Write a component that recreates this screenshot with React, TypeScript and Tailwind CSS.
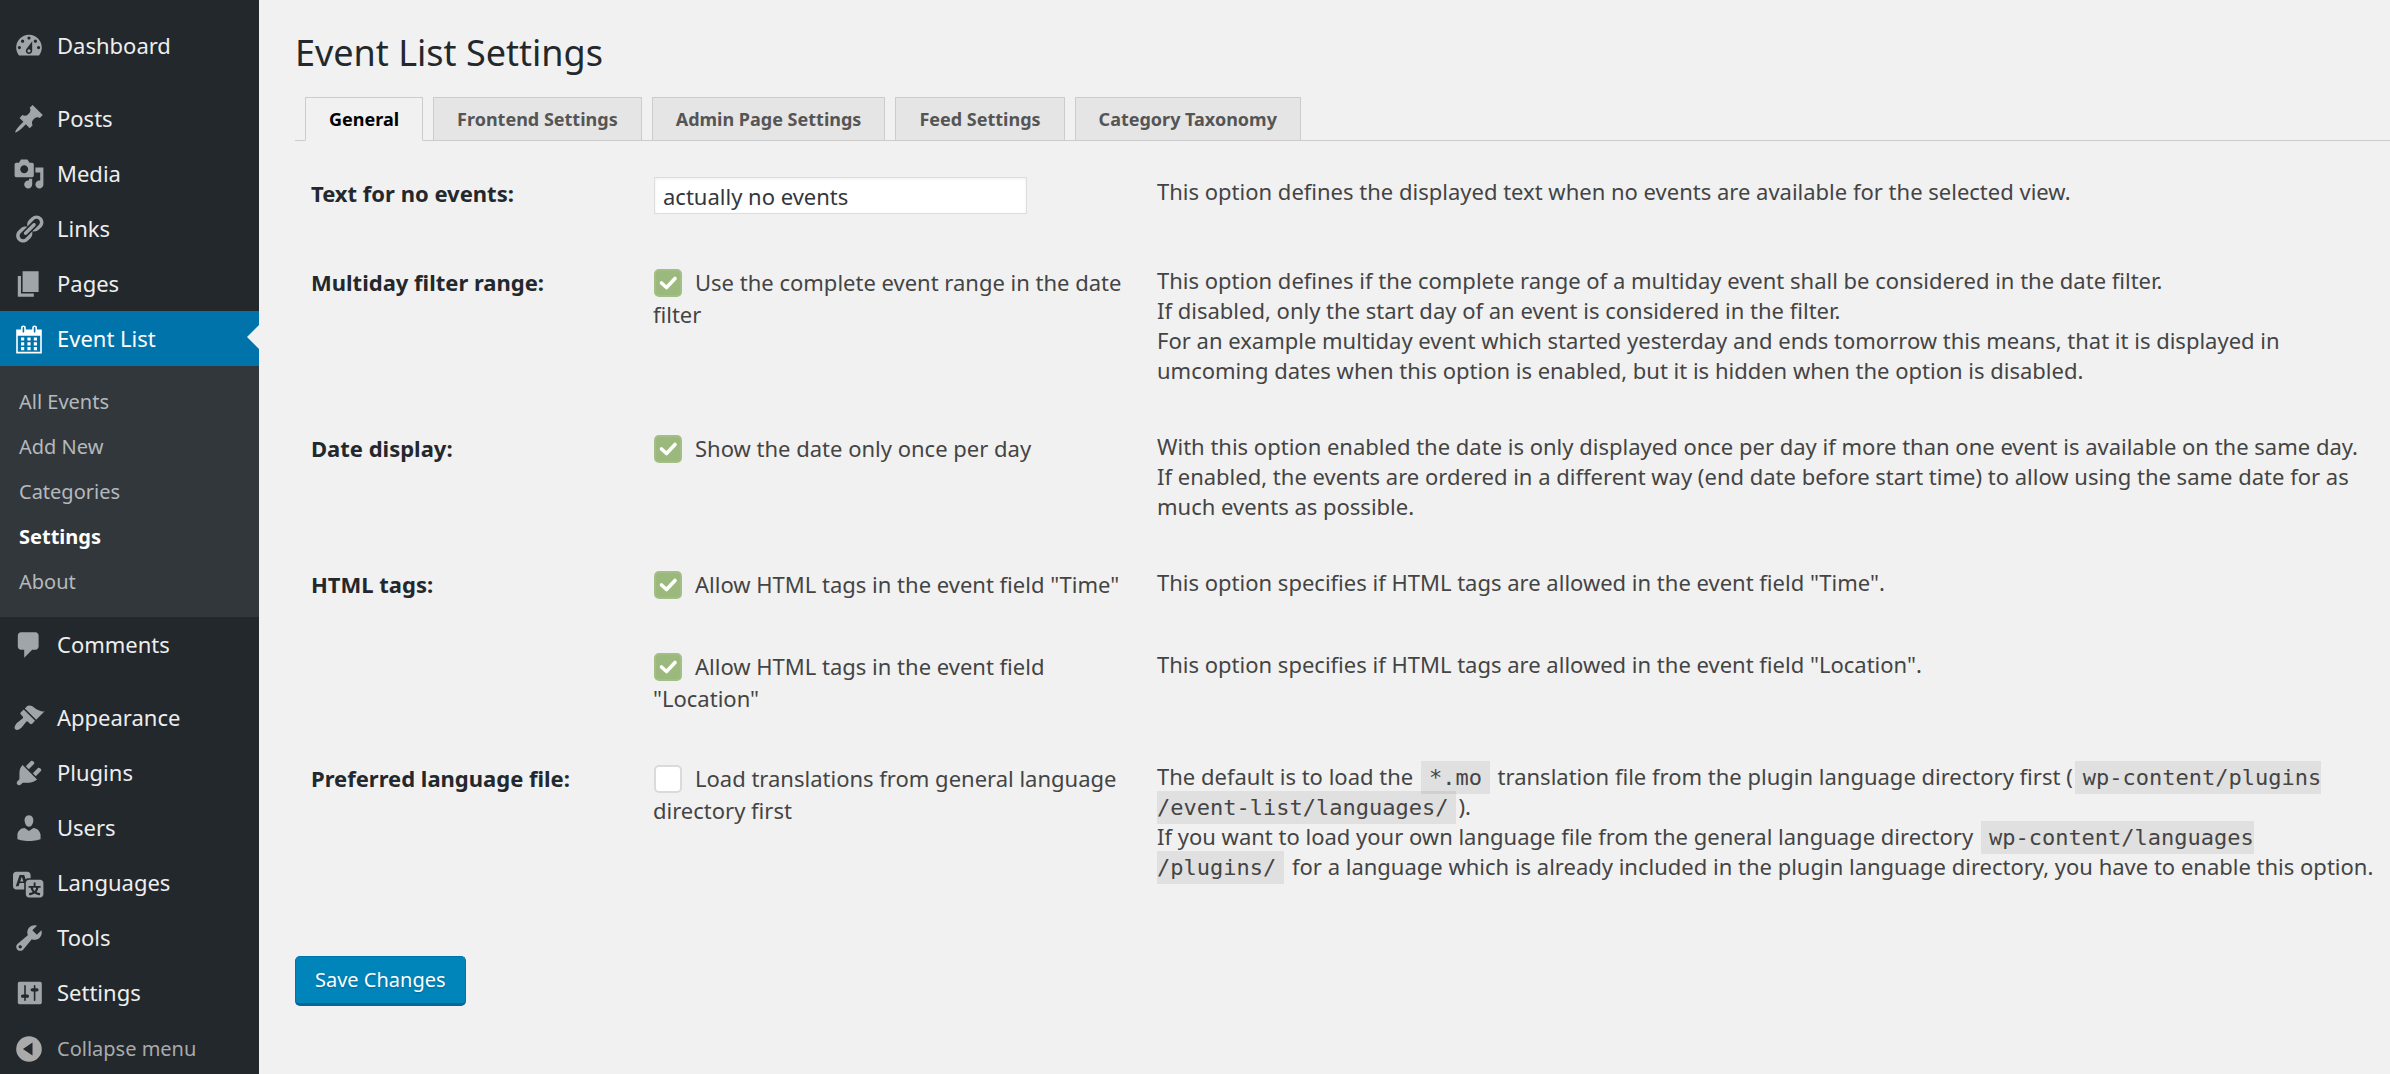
import { useState } from 'react';
import type { ReactNode } from 'react';

const ICONS = {
  dashboard:
    'M3.76 16h12.48c1.1-1.37 1.76-3.11 1.76-5 0-4.42-3.58-8-8-8s-8 3.58-8 8c0 1.89.66 3.63 1.76 5zM10 4c.55 0 1 .45 1 1s-.45 1-1 1-1-.45-1-1 .45-1 1-1zM6 6c.55 0 1 .45 1 1s-.45 1-1 1-1-.45-1-1 .45-1 1-1zm8 0c.55 0 1 .45 1 1s-.45 1-1 1-1-.45-1-1 .45-1 1-1zm-5.37 5.55L12 7v6c0 1.1-.9 2-2 2s-2-.9-2-2c0-.57.24-1.08.63-1.45zM4 10c.55 0 1 .45 1 1s-.45 1-1 1-1-.45-1-1 .45-1 1-1zm12 0c.55 0 1 .45 1 1s-.45 1-1 1-1-.45-1-1 .45-1 1-1zm-5 3c0-.55-.45-1-1-1s-1 .45-1 1 .45 1 1 1 1-.45 1-1z',
  post: 'M10.44 3.02l1.82-1.82 6.36 6.35-1.83 1.82c-1.05-.68-2.48-.57-3.41.36l-.75.75c-.92.93-1.04 2.35-.35 3.41l-1.83 1.82-2.41-2.41-2.8 2.79c-.42.42-3.38 2.71-3.8 2.29s1.86-3.39 2.28-3.81l2.79-2.79L4.1 9.36l1.83-1.82c1.05.69 2.48.57 3.4-.36l.75-.75c.93-.92 1.05-2.35.36-3.41z',
  media:
    'M13 11V4c0-.55-.45-1-1-1h-1.67L9 1H5L3.67 3H2c-.55 0-1 .45-1 1v7c0 .55.45 1 1 1h10c.55 0 1-.45 1-1zM7 4.5c1.38 0 2.5 1.12 2.5 2.5S8.38 9.5 7 9.5 4.5 8.38 4.5 7 5.62 4.5 7 4.5zM14 6h5v10.5c0 1.38-1.12 2.5-2.5 2.5S14 17.88 14 16.5s1.12-2.5 2.5-2.5c.17 0 .34.02.5.05V9h-3V6zm-4 8.05V13h2v3.5c0 1.38-1.12 2.5-2.5 2.5S7 17.88 7 16.5 8.12 14 9.5 14c.17 0 .34.02.5.05z',
  link: 'M17.74 2.76c1.68 1.69 1.68 4.41 0 6.1l-1.53 1.52c-1.12 1.12-2.7 1.47-4.14 1.09l2.62-2.61.76-.77.76-.76c.84-.84.84-2.2 0-3.04-.84-.85-2.2-.85-3.04 0l-.77.76-3.38 3.38c-.37-1.44-.02-3.02 1.1-4.14l1.52-1.53c1.69-1.68 4.42-1.68 6.1 0zM8.59 13.43l5.34-5.34c.42-.42.42-1.1 0-1.52-.44-.43-1.13-.39-1.53 0l-5.33 5.34c-.42.42-.42 1.1 0 1.52.44.43 1.13.39 1.52 0zm-.76 2.29l4.14-4.15c.38 1.44.03 3.02-1.09 4.14l-1.52 1.53c-1.69 1.68-4.41 1.68-6.1 0-1.68-1.68-1.68-4.42 0-6.1l1.53-1.52c1.12-1.12 2.7-1.47 4.14-1.1l-4.14 4.15c-.85.84-.85 2.2 0 3.05.84.84 2.2.84 3.04 0z',
  page: 'M6 15V2h10v13H6zm-1 1h8v2H3V5h2v11z',
  calendar:
    'M15 4h3v15H2V4h3V3c0-.41.15-.76.44-1.06.29-.29.65-.44 1.06-.44s.77.15 1.06.44c.29.3.44.65.44 1.06v1h4V3c0-.41.15-.76.44-1.06.29-.29.65-.44 1.06-.44s.77.15 1.06.44c.29.3.44.65.44 1.06v1zM6 3v2.5c0 .14.05.26.15.36.09.09.21.14.35.14s.26-.05.35-.14c.1-.1.15-.22.15-.36V3c0-.14-.05-.26-.15-.35-.09-.1-.21-.15-.35-.15s-.26.05-.35.15c-.1.09-.15.21-.15.35zm7 0v2.5c0 .14.05.26.14.36.1.09.22.14.36.14s.26-.05.36-.14c.09-.1.14-.22.14-.36V3c0-.14-.05-.26-.14-.35-.1-.1-.22-.15-.36-.15s-.26.05-.36.15c-.09.09-.14.21-.14.35zm4 15V8H3v10h14zM7 9v2H5V9h2zm2 0h2v2H9V9zm4 2V9h2v2h-2zm-6 1v2H5v-2h2zm2 0h2v2H9v-2zm4 2v-2h2v2h-2zm-6 1v2H5v-2h2zm4 2H9v-2h2v2zm4 0h-2v-2h2v2z',
  comment: 'M5 2h9c1.1 0 2 .9 2 2v7c0 1.1-.9 2-2 2h-2l-5 5v-5H5c-1.1 0-2-.9-2-2V4c0-1.1.9-2 2-2z',
  appearance:
    'M14.48 11.06L7.41 3.99l1.5-1.5c.5-.56 2.3-.47 3.51.32 1.21.8 1.43 1.28 2.91 2.1 1.18.64 2.45 1.26 4.45.85zm-.71.71L6.7 4.7 4.93 6.47c-.39.39-.39 1.02 0 1.41l1.06 1.06c.39.39.39 1.03 0 1.42-.6.6-1.43 1.11-2.21 1.69-.35.26-.7.53-1.01.84C1.43 14.23.4 16.08 1.4 17.07c.99 1 2.84-.03 4.18-1.36.31-.31.58-.66.85-1.02.57-.78 1.08-1.61 1.69-2.21.39-.39 1.02-.39 1.41 0l1.06 1.06c.39.39 1.02.39 1.41 0z',
  plugin:
    'M13.11 4.36L9.87 7.6 8 5.73l3.24-3.24c.35-.34 1.05-.2 1.56.32.52.51.66 1.21.31 1.55zm-8 1.77l.91-1.12 9.01 9.01-1.19.84c-.71.71-2.63 1.16-3.82 1.16H6.14L4.9 17.26c-.59.59-1.54.59-2.12 0-.59-.58-.59-1.53 0-2.12l1.24-1.24v-3.88c0-1.13.4-3.19 1.09-3.89zm7.26 3.97l3.24-3.24c.34-.35 1.04-.21 1.55.31.52.51.66 1.21.31 1.55l-3.24 3.25z',
  user: 'M10 9.25c-2.27 0-2.73-3.44-2.73-3.44C7 4.02 7.82 2 9.97 2c2.16 0 2.98 2.02 2.71 3.81 0 0-.41 3.44-2.68 3.44zm0 2.57L12.72 10c2.39 0 4.52 2.33 4.52 4.53v2.49s-3.65 1.13-7.24 1.13c-3.65 0-7.24-1.13-7.24-1.13v-2.49c0-2.25 1.94-4.48 4.47-4.48z',
  translation:
    'M11 7H9.49c-.63 0-1.25.3-1.59.7L7 5H4.13l-2.39 7h1.69l.74-2H7v4H2c-1.1 0-2-.9-2-2V5c0-1.1.9-2 2-2h7c1.1 0 2 .9 2 2v2zM6.51 9H4.49l1-2.93zM10 8h7c1.1 0 2 .9 2 2v7c0 1.1-.9 2-2 2h-7c-1.1 0-2-.9-2-2v-7c0-1.1.9-2 2-2zm7.25 5v-1.08h-3.17V9.75h-1.16v2.17H9.75V13h1.28c.11.85.56 1.85 1.28 2.62-.87.36-1.89.62-2.31.62-.01.02.22.97.2 1.46.84 0 2.21-.5 3.28-1.15 1.09.65 2.48 1.15 3.34 1.15-.02-.49.2-1.44.2-1.46-.43 0-1.49-.27-2.38-.63.7-.77 1.14-1.77 1.25-2.61h1.36zm-3.81 1.93c-.5-.46-.85-1.13-1.01-1.93h2.09c-.17.8-.51 1.47-1 1.93l-.04.03s-.03-.02-.04-.03z',
  tools:
    'M16.68 9.77c-1.34 1.34-3.3 1.67-4.95.99l-5.41 6.52c-.99.99-2.59.99-3.58 0s-.99-2.59 0-3.57l6.52-5.42c-.68-1.65-.35-3.61.99-4.95 1.28-1.28 3.12-1.62 4.72-1.06l-2.89 2.89 2.82 2.82 2.86-2.87c.53 1.58.18 3.39-1.08 4.65zM3.81 16.21c.4.39 1.04.39 1.43 0 .4-.4.4-1.04 0-1.43-.39-.4-1.03-.4-1.43 0-.39.39-.39 1.03 0 1.43z',
  settings:
    'M18 16V4c0-.55-.45-1-1-1H4c-.55 0-1 .45-1 1v12c0 .55.45 1 1 1h13c.55 0 1-.45 1-1zM8 11h1c.55 0 1 .45 1 1s-.45 1-1 1H8v1.5c0 .28-.22.5-.5.5s-.5-.22-.5-.5V13H6c-.55 0-1-.45-1-1s.45-1 1-1h1V5.5c0-.28.22-.5.5-.5s.5.22.5.5V11zm5-2h-1c-.55 0-1-.45-1-1s.45-1 1-1h1V5.5c0-.28.22-.5.5-.5s.5.22.5.5V7h1c.55 0 1 .45 1 1s-.45 1-1 1h-1v5.5c0 .28-.22.5-.5.5s-.5-.22-.5-.5V9z',
  collapse: 'M10 2a8 8 0 1 0 0 16 8 8 0 1 0 0-16zm2.2 4v8L6.2 10z',
};

type IconName = keyof typeof ICONS;

function Icon({ name }: { name: IconName }) {
  return (
    <svg viewBox="0 0 20 20" className="size-8 shrink-0" fill="currentColor" fillRule="evenodd" aria-hidden="true">
      <path d={ICONS[name]} />
    </svg>
  );
}

const MENU: { label: string; icon: IconName }[][] = [
  [{ label: 'Dashboard', icon: 'dashboard' }],
  [
    { label: 'Posts', icon: 'post' },
    { label: 'Media', icon: 'media' },
    { label: 'Links', icon: 'link' },
    { label: 'Pages', icon: 'page' },
    { label: 'Event List', icon: 'calendar' },
    { label: 'Comments', icon: 'comment' },
  ],
  [
    { label: 'Appearance', icon: 'appearance' },
    { label: 'Plugins', icon: 'plugin' },
    { label: 'Users', icon: 'user' },
    { label: 'Languages', icon: 'translation' },
    { label: 'Tools', icon: 'tools' },
    { label: 'Settings', icon: 'settings' },
  ],
];

const SUBMENU = ['All Events', 'Add New', 'Categories', 'Settings', 'About'];

const TABS = ['General', 'Frontend Settings', 'Admin Page Settings', 'Feed Settings', 'Category Taxonomy'];

function Sidebar() {
  return (
    <nav className="flex w-[259px] shrink-0 flex-col gap-[18px] bg-[#23282d] pt-[18px] text-[22px] text-[#eee]">
      {MENU.map((group, i) => (
        <ul key={i}>
          {group.map(({ label, icon }) => {
            const active = label === 'Event List';
            return (
              <li key={label}>
                <a
                  href="#"
                  className={`relative flex h-[55px] items-center gap-3 pl-[13px] ${active ? 'bg-[#0073aa] text-white' : ''}`}
                >
                  <span className={active ? 'text-white' : 'text-[#a0a5aa]'}>
                    <Icon name={icon} />
                  </span>
                  {label}
                  {active && (
                    <span className="absolute top-[14px] right-0 border-y-12 border-r-12 border-y-transparent border-r-[#f1f1f1]" />
                  )}
                </a>
                {active && (
                  <ul className="bg-[#32373c] py-[13px] text-xl text-[#b4b9be]">
                    {SUBMENU.map((item) => (
                      <li key={item}>
                        <a
                          href="#"
                          className={`flex h-[45px] items-center pl-[19px] ${item === 'Settings' ? 'font-bold text-white' : ''}`}
                        >
                          {item}
                        </a>
                      </li>
                    ))}
                  </ul>
                )}
              </li>
            );
          })}
          {i === MENU.length - 1 && (
            <li>
              <button
                type="button"
                className="flex h-[54px] w-full items-center gap-3 pt-1 pl-[13px] text-xl text-[#aaa]"
              >
                <Icon name="collapse" />
                Collapse menu
              </button>
            </li>
          )}
        </ul>
      ))}
    </nav>
  );
}

function Checkbox({ label, defaultChecked = false }: { label: string; defaultChecked?: boolean }) {
  const [checked, setChecked] = useState(defaultChecked);

  return (
    <label>
      <span className="relative mr-[13px] ml-px inline-block size-7 align-[-6px]">
        <input
          type="checkbox"
          checked={checked}
          onChange={(e) => setChecked(e.target.checked)}
          className="block size-7 appearance-none rounded-[5px] border-2 border-[#dadada] bg-white checked:border-[#a3bf87] checked:bg-[#9bb97c]"
        />
        {checked && (
          <svg viewBox="0 0 28 28" className="pointer-events-none absolute inset-0 size-7" fill="none" aria-hidden="true">
            <path d="M7.5 14l5 4.5L21 9.5" stroke="#fff" strokeWidth="3.6" strokeLinecap="round" strokeLinejoin="round" />
          </svg>
        )}
      </span>
      {label}
    </label>
  );
}

function Row({ title, field, children }: { title?: ReactNode; field: ReactNode; children: ReactNode }) {
  return (
    <tr className="h-[82px] align-top">
      <th scope="row" className="w-[342px] px-4 py-6 text-left leading-8 font-bold text-[#23282d]">
        {title}
      </th>
      <td className="w-[504px] py-6 pr-2 pl-4 leading-8">{field}</td>
      <td className="py-[23px] pr-3 pl-4 leading-[30px]">{children}</td>
    </tr>
  );
}

function Code({ children }: { children: ReactNode }) {
  return (
    <code className="mx-0.5 bg-black/7 px-2 py-1 font-['DejaVu_Sans_Mono',monospace] text-[22px] leading-none">
      {children}
    </code>
  );
}

export default function App() {
  const [tab, setTab] = useState('General');

  return (
    <div className="flex min-h-screen bg-[#f1f1f1] font-['Noto_Sans',sans-serif] text-[#444]">
      <Sidebar />

      <main className="min-w-0 flex-1 pl-9">
        <h1 className="pt-7 text-[36px] leading-[50px] text-[#23282d]">Event List Settings</h1>

        <div role="tablist" className="mt-[19px] flex gap-2.5 border-b border-[#ccc] pl-2.5">
          {TABS.map((name) => (
            <button
              key={name}
              type="button"
              role="tab"
              aria-selected={tab === name}
              onClick={() => setTab(name)}
              className={`-mb-px h-11 border px-[23px] text-lg font-bold ${
                tab === name
                  ? 'border-[#ccc] border-b-[#f1f1f1] bg-[#f1f1f1] text-black'
                  : 'border-[#ccc] bg-[#e5e5e5] text-[#555]'
              }`}
            >
              {name}
            </button>
          ))}
        </div>

        <form onSubmit={(e) => e.preventDefault()}>
          <table className="mt-3 w-full table-fixed text-[22px]">
            <tbody>
              <Row
                title={<label htmlFor="no-events">Text for no events:</label>}
                field={
                  <input
                    id="no-events"
                    type="text"
                    defaultValue="actually no events"
                    className="mb-1 ml-px block h-[37px] w-[373px] border border-[#ddd] bg-white px-2 text-[#32373c] shadow-[inset_0_1px_3px_rgba(0,0,0,0.07)]"
                  />
                }
              >
                This option defines the displayed text when no events are available for the selected view.
              </Row>
              <Row
                title="Multiday filter range:"
                field={<Checkbox label="Use the complete event range in the date filter" defaultChecked />}
              >
                This option defines if the complete range of a multiday event shall be considered in the date filter.
                <br />
                If disabled, only the start day of an event is considered in the filter.
                <br />
                For an example multiday event which started yesterday and ends tomorrow this means, that it is displayed in
                umcoming dates when this option is enabled, but it is hidden when the option is disabled.
              </Row>
              <Row title="Date display:" field={<Checkbox label="Show the date only once per day" defaultChecked />}>
                With this option enabled the date is only displayed once per day if more than one event is available on the
                same day.
                <br />
                If enabled, the events are ordered in a different way (end date before start time) to allow using the same
                date for as much events as possible.
              </Row>
              <Row
                title="HTML tags:"
                field={<Checkbox label={'Allow HTML tags in the event field "Time"'} defaultChecked />}
              >
                This option specifies if HTML tags are allowed in the event field "Time".
              </Row>
              <Row field={<Checkbox label={'Allow HTML tags in the event field "Location"'} defaultChecked />}>
                This option specifies if HTML tags are allowed in the event field "Location".
              </Row>
              <Row
                title="Preferred language file:"
                field={<Checkbox label="Load translations from general language directory first" />}
              >
                The default is to load the <Code>*.mo</Code> translation file from the plugin language directory first (
                <Code>
                  wp-content/plugins
                  <wbr />
                  /event-list/languages/
                </Code>
                ).
                <br />
                If you want to load your own language file from the general language directory{' '}
                <Code>
                  wp-content/languages
                  <br />
                  /plugins/
                </Code>{' '}
                for a language which is already included in the plugin language directory, you have to enable this option.
              </Row>
            </tbody>
          </table>

          <button
            type="submit"
            className="mt-[52px] h-[50px] rounded-[5px] border border-b-3 border-[#0073aa] border-b-[#006799] bg-[#0085ba] px-[19px] text-xl text-white text-shadow-[0_1px_2px_#006799]"
          >
            Save Changes
          </button>
        </form>
      </main>
    </div>
  );
}
